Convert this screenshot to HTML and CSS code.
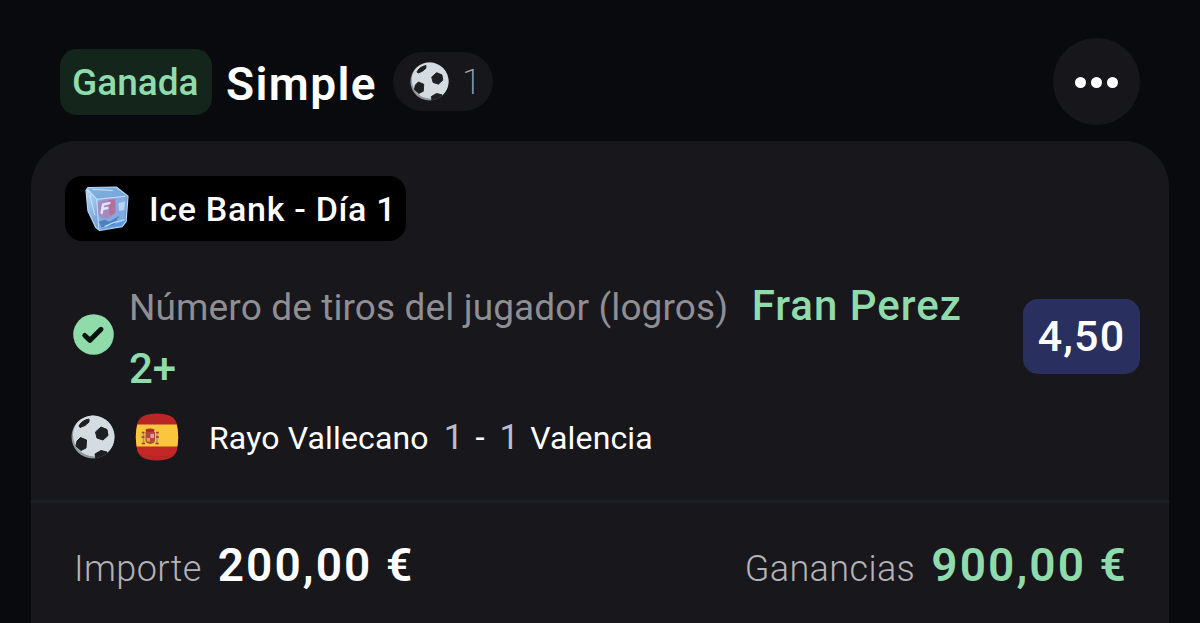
FILE: index.html
```html
<!DOCTYPE html>
<html lang="es">
<head>
<meta charset="UTF-8">
<meta name="viewport" content="width=device-width, initial-scale=1.0">
<title>Apuesta simple</title>
<link rel="stylesheet" href="styles.css">
</head>
<body>
<svg width="0" height="0" class="defs">
  <defs>
    <clipPath id="ballClip"><circle cx="22" cy="22" r="21.5"/></clipPath>
    <symbol id="ball" viewBox="0 0 44 44">
      <g clip-path="url(#ballClip)">
        <rect width="44" height="44" fill="#8e979f"/>
        <circle cx="23.5" cy="20" r="21.5" fill="#d5dce1"/>
        <g fill="#1d1f20" stroke="#1d1f20" stroke-width="1" stroke-linejoin="round">
          <path d="M8 11 C10 7 13 5 18 4 L18 7 L14 10.500 L9 12.500 Z"/>
          <path d="M30 12 L36 14.500 L37 20.500 L32 25 L26 23 L24.500 17 Z"/>
          <path d="M9.500 22.500 L15.500 25 L15 33 L10 35.500 L5 31 L6 26 Z"/>
          <path d="M24 39 L30 35.500 L36 37 L35 44 L25 44 Z"/>
        </g>
      </g>
    </symbol>
  </defs>
</svg>

<header class="header">
  <span class="status">Ganada</span>
  <h1 class="title">Simple</h1>
  <span class="count">
    <svg class="count-ball"><use href="#ball"/></svg>
    <span class="count-number">1</span>
  </span>
  <button class="menu" aria-label="Más opciones"><i></i><i></i><i></i></button>
</header>

<main class="card">
  <div class="promo">
    <svg class="cube" viewBox="0 0 46 48">
      <defs>
        <linearGradient id="ice" x1="0" y1="0" x2="1" y2="1">
          <stop offset="0" stop-color="#b9dcf8"/>
          <stop offset=".5" stop-color="#7ba6dc"/>
          <stop offset="1" stop-color="#4f8fdc"/>
        </linearGradient>
      </defs>
      <path d="M3 2 L32 1.500 L44 11 L42 37 L38 42 L15 46 L11 43 L3 26 L1 5 Z" fill="url(#ice)" stroke="#b4d8f7" stroke-width="1.200" stroke-linejoin="round"/>
      <path d="M3 3 L31 2.500 L42 11 L13 14 Z" fill="#76a8dc" opacity=".8"/>
      <path d="M13 14 L42 11 L41 36 L15 45 Z" fill="#88aee4" opacity=".8"/>
      <path d="M13 17 Q22 12 31 14 L31 28 Q26 34 18 34 L12 28 Z" fill="#a48cc0"/>
      <path d="M24 15 L31 14 L31 28 L25 31 Z" fill="#b5719b"/>
      <path d="M17 28 L18.500 19.500 L25 18 M18 24 L23 23" fill="none" stroke="#e4e2f8" stroke-width="2.500" stroke-linecap="round"/>
      <path d="M34 18 L41 16 L40 25 L35 26 Z" fill="#b9d5f4"/>
      <path d="M14 37 L20 35 L25 37 L35 31 L30 40 L17 43 Z" fill="#376fae" opacity=".7"/>
      <path d="M3 5 L12 14 L14 44 M13 14 L41 11 M5 10 L10 30 M8 4 L28 5" fill="none" stroke="#d8edff" stroke-width="1" stroke-linecap="round" opacity=".85"/>
      <path d="M20 42 L29 38 L40 35" fill="none" stroke="#a9e0ff" stroke-width="1.300"/>
    </svg>
    <span class="promo-text">Ice Bank - Día 1</span>
  </div>

  <section class="bet">
    <svg class="check" viewBox="0 0 41 41">
      <circle cx="20.500" cy="20.500" r="20.300" fill="#8fdba9"/>
      <path d="M11.800 21.500 L17 26.300 L28 15.300" fill="none" stroke="#07130f" stroke-width="5" stroke-linecap="round" stroke-linejoin="round"/>
    </svg>
    <p class="market">
      <span class="market-name">Número de tiros del jugador (logros)</span>
      <span class="pick">Fran Perez</span> <span class="pick line">2+</span>
    </p>
    <span class="odds">4,50</span>
  </section>

  <section class="match">
    <svg class="match-ball"><use href="#ball"/></svg>
    <svg class="flag" viewBox="0 0 44 48">
      <defs>
        <clipPath id="flagClip"><path d="M22 .5 C34 .5 39.500 4 41.500 10 C43.800 19 43.800 29 41.500 38 C39.500 44 34 47.500 22 47.500 C10 47.500 4.500 44 2.500 38 C.2 29 .2 19 2.500 10 C4.500 4 10 .5 22 .5 Z"/></clipPath>
      </defs>
      <g clip-path="url(#flagClip)">
        <rect width="44" height="48" fill="#b92725"/>
        <path d="M0 33 H44 V39 Q36 43 22 43 Q8 43 0 39 Z" fill="#c42826"/>
        <rect y="11.500" width="44" height="22" fill="#fac63b"/>
        <path d="M11 19 L10.500 16.500 Q15 14.500 19.500 16.500 L19 19 Z" fill="#a8322a"/>
        <path d="M10.500 19 H20 V27 Q20 30.500 15.200 31 Q10.500 30.500 10.500 27 Z" fill="#b5483c"/>
        <path d="M15.500 21 H19 V25 H15.500 Z" fill="#d9a3a3"/>
        <path d="M11.500 25 H15 V28.500 H12 Z" fill="#e0a64a"/>
        <path d="M8.500 20 V30 M22 20 V30" stroke="#a5908a" stroke-width="1.500"/>
        <path d="M6.800 19.500 H9.500 M21 19.500 H23.700 M6.500 24 H9.500 M21 24 H24 M6.800 30.500 H10 M20.500 30.500 H23.700" stroke="#9c3b2c" stroke-width="1.300"/>
      </g>
    </svg>
    <span class="team home">Rayo Vallecano</span>
    <span class="goals">1</span>
    <span class="dash">-</span>
    <span class="goals">1</span>
    <span class="team away">Valencia</span>
  </section>

  <footer class="totals">
    <span class="label">Importe</span>
    <span class="amount">200,00 €</span>
    <span class="label winnings">Ganancias</span>
    <span class="amount won">900,00 €</span>
  </footer>
</main>
</body>
</html>
```
FILE: styles.css
```css
* {
  box-sizing: border-box;
}
body {
  margin: 0;
  background-color: #090a0e;
  font-family: Roboto, 'Liberation Sans', sans-serif;
  color: #fff;
  white-space: nowrap;
}
.defs {
  display: block;
}
.header {
  display: flex;
  align-items: flex-start;
  height: 141px;
  padding: 38px 60px 0;
}
.status {
  width: 152px;
  height: 66px;
  margin-top: 11px;
  padding-left: 12px;
  border-radius: 17px;
  background-color: #14261b;
  color: #8fdbac;
  font-size: 37px;
  font-weight: 500;
  line-height: 68px;
}
.title {
  width: 167px;
  margin: 13px 0 0 14px;
  font-size: 46px;
  font-weight: 600;
  line-height: 66px;
  letter-spacing: 1.4px;
}
.count {
  display: flex;
  align-items: center;
  width: 100px;
  height: 59px;
  margin-top: 14px;
  padding-left: 17px;
  border-radius: 30px;
  background-color: #17161b;
}
.count-ball {
  width: 39px;
  height: 39px;
}
.count-number {
  margin-left: 13px;
  padding-top: 2px;
  color: #a5a5ac;
  font-size: 35px;
  font-weight: 200;
}
.menu {
  display: flex;
  justify-content: center;
  align-items: center;
  gap: 5px;
  width: 87px;
  height: 87px;
  margin-left: auto;
  padding: 2px 0 0;
  border: 0;
  border-radius: 50%;
  background-color: #17161b;
}
.menu i {
  width: 11px;
  height: 11px;
  border-radius: 50%;
  background-color: #fff;
}
.card {
  height: 482px;
  margin: 0 31px;
  padding-top: 35px;
  border-radius: 46px 46px 0 0;
  background-color: #18171c;
}
.promo {
  display: flex;
  align-items: center;
  width: 341px;
  height: 65px;
  margin-left: 34px;
  padding-left: 20px;
  border-radius: 17px;
  background-color: #000;
}
.cube {
  width: 45px;
  height: 48px;
}
.promo-text {
  margin-left: 19px;
  font-size: 34px;
  font-weight: 500;
  letter-spacing: 0.7px;
}
.bet {
  display: flex;
  height: 165px;
  padding: 33px 29px 0 42px;
}
.check {
  width: 41px;
  height: 41px;
  margin-top: 40px;
}
.market {
  width: 860px;
  margin: 1px 0 0 15px;
  font-size: 42px;
  line-height: 61px;
  white-space: normal;
}
.market-name {
  margin-right: 13px;
  color: #8f8e92;
  font-size: 37px;
  letter-spacing: 0.12px;
}
.pick {
  color: #8fdbac;
  font-weight: 500;
  letter-spacing: 1px;
}
.line {
  letter-spacing: 0;
}
.odds {
  width: 117px;
  height: 75px;
  margin: 25px 0 0 auto;
  border-radius: 15px;
  background-color: #29305f;
  font-size: 43px;
  font-weight: 500;
  line-height: 75px;
  text-align: center;
  letter-spacing: 1.2px;
}
.match {
  display: flex;
  align-items: center;
  height: 94px;
  padding: 0 0 32px 40px;
  font-size: 33px;
}
.match-ball {
  width: 44px;
  height: 44px;
}
.flag {
  width: 44px;
  height: 48px;
  margin-left: 20px;
}
.team {
  padding-top: 2px;
  font-size: 32px;
  letter-spacing: 0.15px;
}
.home {
  margin-left: 30px;
}
.goals {
  margin-left: 15px;
  color: #bdbccb;
  font-size: 35px;
}
.dash {
  margin-left: 12px;
}
.away {
  margin-left: 11px;
}
.totals {
  display: flex;
  align-items: baseline;
  height: 123px;
  padding: 35px 41px 0 43px;
  border-top: 3px solid #20202b;
}
.label {
  color: #b3b2b7;
  font-size: 36px;
  font-weight: 300;
  letter-spacing: 0.4px;
}
.amount {
  margin-left: 16px;
  font-size: 46px;
  font-weight: 600;
  letter-spacing: 2.1px;
}
.winnings {
  margin-left: auto;
}
.won {
  color: #8fdbac;
}
```
